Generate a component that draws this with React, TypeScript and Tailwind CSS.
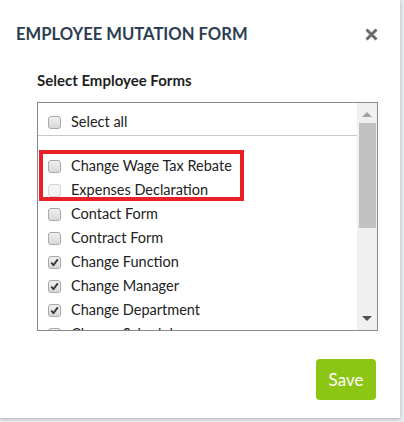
import React from 'react'

type Item = { label: string; checked: boolean; disabled?: boolean }

const items: Item[] = [
  { label: 'Change Wage Tax Rebate', checked: false },
  { label: 'Expenses Declaration', checked: false, disabled: true },
  { label: 'Contact Form', checked: false },
  { label: 'Contract Form', checked: false },
  { label: 'Change Function', checked: true },
  { label: 'Change Manager', checked: true },
  { label: 'Change Department', checked: true },
  { label: 'Change Schedule', checked: true },
]

const Checkbox = ({ checked, disabled }: { checked: boolean; disabled?: boolean }): React.JSX.Element => (
  <span
    className={
      disabled
        ? 'flex h-[13px] w-[13px] shrink-0 items-center justify-center rounded-[3px] border border-[#d6d6d6] bg-[#f3f3f3]'
        : 'flex h-[13px] w-[13px] shrink-0 items-center justify-center rounded-[3px] border border-[#a9a9a9] bg-gradient-to-b from-[#f0f0f0] to-[#d8d8d8]'
    }
  >
    {checked && (
      <svg width="9" height="9" viewBox="0 0 9 9">
        <path d="M1.2 4.6 L3.5 7 L7.8 1.4" fill="none" stroke="#333" strokeWidth="1.8" />
      </svg>
    )}
  </span>
)

const Row = ({ item }: { item: Item }): React.JSX.Element => (
  <div className="flex h-[24px] shrink-0 items-center gap-[10px] pl-[10px]">
    <Checkbox checked={item.checked} disabled={item.disabled} />
    <span className="whitespace-nowrap text-[14.5px] text-[#222]">{item.label}</span>
  </div>
)

const App = (): React.JSX.Element => {
  return (
    <div className="flex h-[422px] w-full bg-[#e8eaee] font-['Lato',sans-serif]">
      <div className="flex h-[418px] w-[400px] flex-col bg-white shadow-[0_1px_3px_rgba(0,0,0,0.25)]">
        <div className="flex h-[68px] items-center justify-between pl-[16px] pr-[22px]">
          <h2 className="text-[16.6px] font-bold text-[#2c3e50]">EMPLOYEE MUTATION FORM</h2>
          <svg width="13" height="13" viewBox="0 0 13 13">
            <path d="M1.5 1.5 L11.5 11.5 M11.5 1.5 L1.5 11.5" stroke="#6b6b6b" strokeWidth="3" />
          </svg>
        </div>
        <div className="flex flex-col pl-[37px] pr-[22px]">
          <p className="h-[24px] text-[15px] font-bold leading-[24px] text-[#1f1f1f]">Select Employee Forms</p>
          <div className="relative mt-[10px] flex h-[229px] border border-[#8a8a8a]">
            <div className="flex flex-1 flex-col overflow-hidden">
              <div className="mt-[7px]">
                <Row item={{ label: 'Select all', checked: false }} />
              </div>
              <div className="mt-[1px] h-px shrink-0 bg-[#c8c8c8]" />
              <div className="mt-[18px] flex flex-col">
                {items.map((item) => (
                  <Row key={item.label} item={item} />
                ))}
              </div>
            </div>
            <div className="flex w-[20px] flex-col items-center bg-[#f0f0f0]">
              <div className="mt-[9px] h-0 w-0 border-x-[5px] border-b-[5px] border-x-transparent border-b-[#a3a3a3]" />
              <div className="mt-[6px] h-[105px] w-[17px] bg-[#c1c1c1]" />
              <div className="mt-auto mb-[9px] h-0 w-0 border-x-[5px] border-t-[5px] border-x-transparent border-t-[#505050]" />
            </div>
            <div className="absolute left-[1px] top-[47px] h-[51px] w-[205px] border-4 border-[#e8202a]" />
          </div>
        </div>
        <div className="mt-auto flex justify-end pb-[18px] pr-[24px]">
          <button className="h-[41px] w-[60px] rounded-[4px] bg-[#8cc614] text-[17px] text-white">Save</button>
        </div>
      </div>
    </div>
  )
}

export default App
